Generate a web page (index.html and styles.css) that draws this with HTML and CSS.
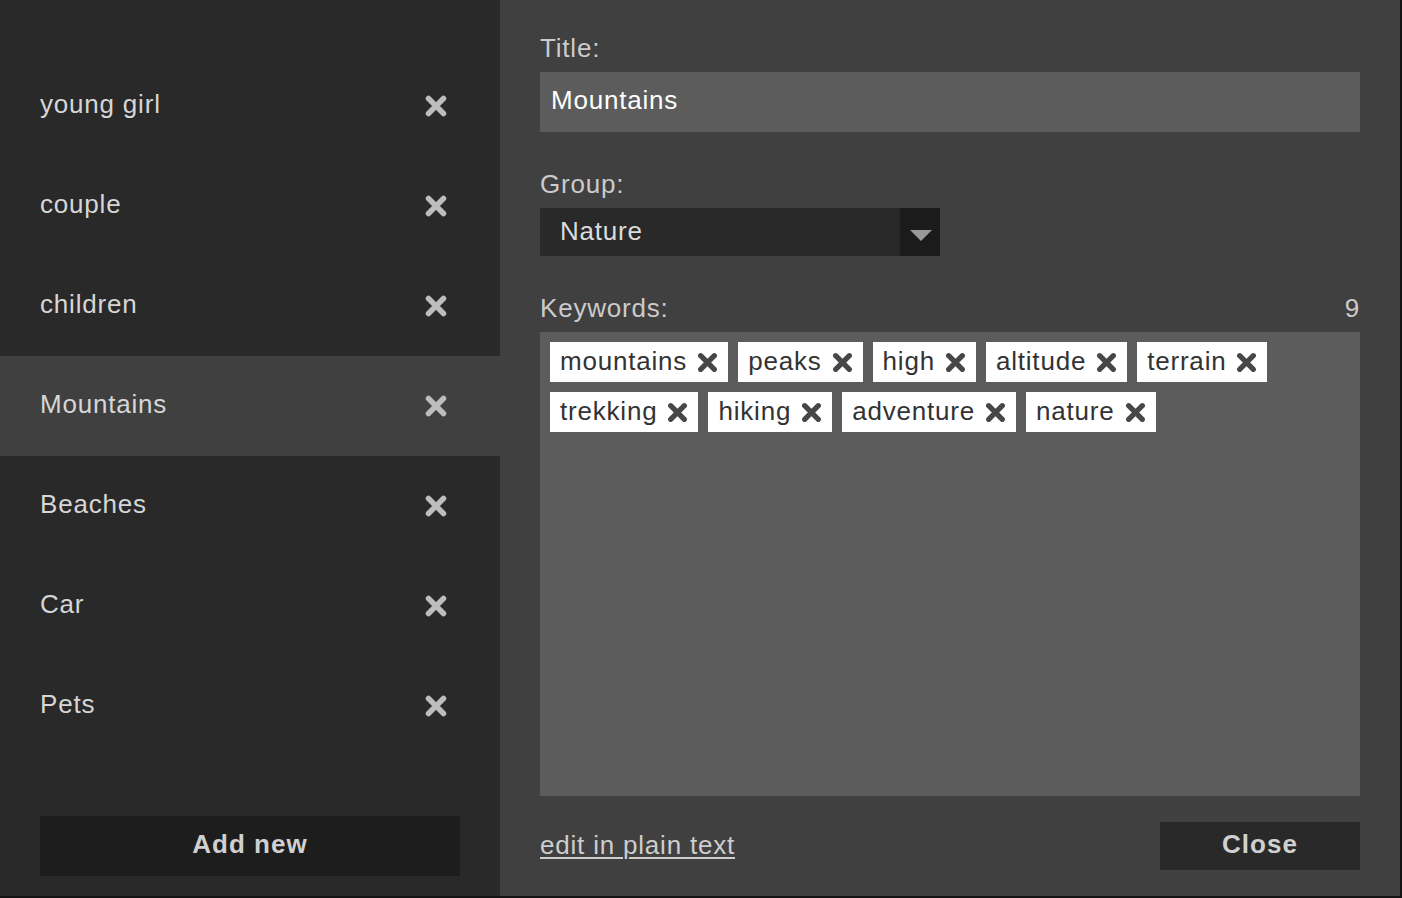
FILE: index.html
```html
<!DOCTYPE html>
<html>
<head>
<meta charset="utf-8">
<link rel="stylesheet" href="styles.css">
</head>
<body>
<div class="app">
  <aside class="sidebar">
    <ul class="groups">
      <li class="group"><span>young girl</span><svg class="del" viewBox="0 0 22 22"><path d="M3.5 3.5 18.5 18.5M18.5 3.5 3.5 18.5"/></svg></li>
      <li class="group"><span>couple</span><svg class="del" viewBox="0 0 22 22"><path d="M3.5 3.5 18.5 18.5M18.5 3.5 3.5 18.5"/></svg></li>
      <li class="group"><span>children</span><svg class="del" viewBox="0 0 22 22"><path d="M3.5 3.5 18.5 18.5M18.5 3.5 3.5 18.5"/></svg></li>
      <li class="group selected"><span>Mountains</span><svg class="del" viewBox="0 0 22 22"><path d="M3.5 3.5 18.5 18.5M18.5 3.5 3.5 18.5"/></svg></li>
      <li class="group"><span>Beaches</span><svg class="del" viewBox="0 0 22 22"><path d="M3.5 3.5 18.5 18.5M18.5 3.5 3.5 18.5"/></svg></li>
      <li class="group"><span>Car</span><svg class="del" viewBox="0 0 22 22"><path d="M3.5 3.5 18.5 18.5M18.5 3.5 3.5 18.5"/></svg></li>
      <li class="group"><span>Pets</span><svg class="del" viewBox="0 0 22 22"><path d="M3.5 3.5 18.5 18.5M18.5 3.5 3.5 18.5"/></svg></li>
    </ul>
    <button class="add-btn">Add new</button>
  </aside>
  <main class="editor">
    <div class="label">Title:</div>
    <div class="title-input">Mountains</div>
    <div class="label gap">Group:</div>
    <div class="select">
      <span class="select-value">Nature</span>
      <span class="select-arrow"><svg viewBox="0 0 22 11"><path d="M0 0H22L11 11Z"/></svg></span>
    </div>
    <div class="label gap kw-head"><span>Keywords:</span><span>9</span></div>
    <div class="keywords">
      <span class="tag">mountains<svg viewBox="0 0 20 20"><path d="M3.5 3.5 16.5 16.5M16.5 3.5 3.5 16.5"/></svg></span>
      <span class="tag">peaks<svg viewBox="0 0 20 20"><path d="M3.5 3.5 16.5 16.5M16.5 3.5 3.5 16.5"/></svg></span>
      <span class="tag">high<svg viewBox="0 0 20 20"><path d="M3.5 3.5 16.5 16.5M16.5 3.5 3.5 16.5"/></svg></span>
      <span class="tag">altitude<svg viewBox="0 0 20 20"><path d="M3.5 3.5 16.5 16.5M16.5 3.5 3.5 16.5"/></svg></span>
      <span class="tag">terrain<svg viewBox="0 0 20 20"><path d="M3.5 3.5 16.5 16.5M16.5 3.5 3.5 16.5"/></svg></span>
      <span class="tag">trekking<svg viewBox="0 0 20 20"><path d="M3.5 3.5 16.5 16.5M16.5 3.5 3.5 16.5"/></svg></span>
      <span class="tag">hiking<svg viewBox="0 0 20 20"><path d="M3.5 3.5 16.5 16.5M16.5 3.5 3.5 16.5"/></svg></span>
      <span class="tag">adventure<svg viewBox="0 0 20 20"><path d="M3.5 3.5 16.5 16.5M16.5 3.5 3.5 16.5"/></svg></span>
      <span class="tag">nature<svg viewBox="0 0 20 20"><path d="M3.5 3.5 16.5 16.5M16.5 3.5 3.5 16.5"/></svg></span>
    </div>
    <div class="footer">
      <a class="plain-link" href="#">edit in plain text</a>
      <button class="close-btn">Close</button>
    </div>
  </main>
</div>
</body>
</html>
```
FILE: styles.css
```css
html, body {
  margin: 0;
  padding: 0;
  background: #141414;
}
body {
  font-family: "Liberation Sans", Arial, sans-serif;
  font-size: 26px;
  letter-spacing: 0.8px;
  width: 1402px;
  height: 898px;
  overflow: hidden;
}
.app {
  display: flex;
  width: 1400px;
  height: 896px;
}
.sidebar {
  width: 500px;
  background: #292929;
  padding: 56px 0 20px;
  box-sizing: border-box;
  display: flex;
  flex-direction: column;
}
.groups {
  list-style: none;
  margin: 0;
  padding: 0;
}
.group {
  height: 100px;
  box-sizing: border-box;
  padding: 0 53px 4px 40px;
  display: flex;
  align-items: center;
  justify-content: space-between;
  color: #d6d6d6;
}
.group.selected {
  background: #404040;
}
.del {
  width: 22px;
  height: 22px;
  margin-top: 4px;
}
.del path {
  stroke: #bdbdbd;
  stroke-width: 5.5;
  stroke-linecap: round;
  fill: none;
}
.add-btn {
  margin: 60px 40px 0;
  height: 60px;
  padding: 0 0 4px;
  background: #1d1d1d;
  border: none;
  color: #d0d0d0;
  font: bold 26px "Liberation Sans", Arial, sans-serif;
  letter-spacing: 1px;
}
.editor {
  flex: 1;
  background: #404040;
  padding: 28px 40px 26px;
  box-sizing: border-box;
  display: flex;
  flex-direction: column;
}
.label {
  height: 40px;
  line-height: 40px;
  margin-bottom: 4px;
  color: #cbcbcb;
}
.label.gap {
  margin-top: 32px;
}
.kw-head {
  display: flex;
  justify-content: space-between;
}
.title-input {
  height: 60px;
  line-height: 57px;
  background: #5c5c5c;
  color: #ffffff;
  padding-left: 11px;
}
.select {
  width: 400px;
  height: 48px;
  display: flex;
  background: #292929;
}
.select-value {
  flex: 1;
  padding-left: 20px;
  line-height: 46px;
  color: #dcdcdc;
}
.select-arrow {
  width: 40px;
  background: #1b1b1b;
  display: flex;
  align-items: center;
  justify-content: center;
}
.select-arrow svg {
  width: 22px;
  height: 11px;
  margin-top: 6px;
  margin-left: 1px;
}
.select-arrow path {
  fill: #9a9a9a;
}
.keywords {
  flex: 1;
  background: #5c5c5c;
  padding: 10px;
  display: flex;
  flex-wrap: wrap;
  align-content: flex-start;
  gap: 10px;
}
.tag {
  height: 40px;
  background: #ffffff;
  color: #333333;
  display: flex;
  align-items: center;
  padding: 0 10px 3px 10px;
  box-sizing: border-box;
  line-height: 36px;
}
.tag svg {
  width: 21px;
  height: 21px;
  margin-left: 10px;
  margin-top: 3px;
}
.tag path {
  stroke: #474747;
  stroke-width: 5;
  stroke-linecap: round;
  fill: none;
}
.footer {
  margin-top: 26px;
  height: 48px;
  display: flex;
  align-items: center;
  justify-content: space-between;
}
.plain-link {
  color: #cdcdcd;
  text-decoration: underline;
  text-underline-offset: 3px;
  text-decoration-thickness: 2px;
  margin-top: -2px;
}
.close-btn {
  width: 200px;
  height: 48px;
  padding: 0 0 4px;
  background: #292929;
  border: none;
  color: #d0d0d0;
  font: bold 26px "Liberation Sans", Arial, sans-serif;
  letter-spacing: 1px;
}
```
